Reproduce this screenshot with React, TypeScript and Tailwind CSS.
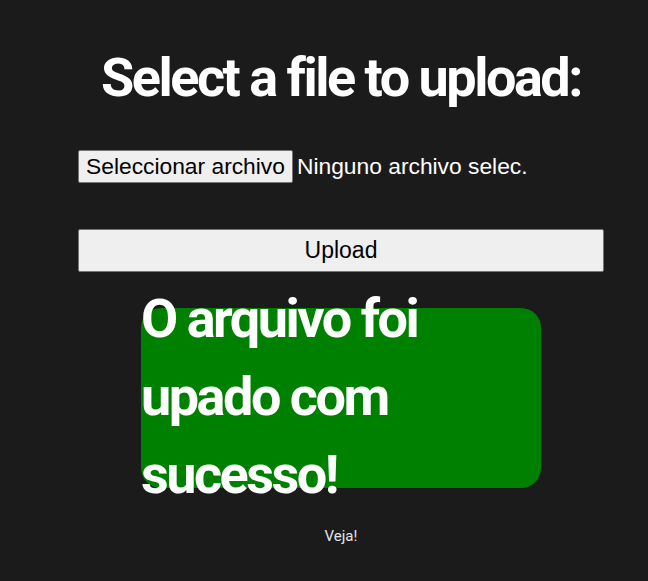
const titleFont = { fontFamily: "Roboto, 'Noto Sans', sans-serif" };

export default function App() {
  return (
    <div className="min-h-screen bg-[#1b1b1b] pt-[46px] text-white">
      <div className="ml-[78px] flex w-[526px] flex-col items-center">
        <h1
          className="whitespace-nowrap text-[54px] font-bold leading-[64px] tracking-[-2.5px]"
          style={titleFont}
        >
          Select a file to upload:
        </h1>

        <div className="mt-[40px] flex w-full items-center gap-[4px] font-['Liberation_Sans',Arial,sans-serif] text-[22.8px] leading-[25px]">
          <button className="rounded-[2px] border border-[#767676] bg-[#efefef] px-[7px] py-[3px] text-black">
            Seleccionar archivo
          </button>
          <span className="text-white">Ninguno archivo selec.</span>
        </div>

        <button className="mt-[46px] w-full rounded-[2px] border border-[#767676] bg-[#efefef] py-[8px] font-['Liberation_Sans',Arial,sans-serif] text-[23px] leading-[25px] text-black">
          Upload
        </button>

        <div className="mt-[36px] h-[180px] w-[400px] rounded-[20px] bg-[#008000]">
          <p
            className="-mt-[28px] text-[54px] font-bold leading-[78px] tracking-[-2.5px]"
            style={titleFont}
          >
            O arquivo foi upado com sucesso!
          </p>
        </div>

        <p className="mt-[36px] text-[15px] leading-[24px] text-[#e5e5e5]" style={titleFont}>
          Veja!
        </p>
      </div>
    </div>
  );
}
